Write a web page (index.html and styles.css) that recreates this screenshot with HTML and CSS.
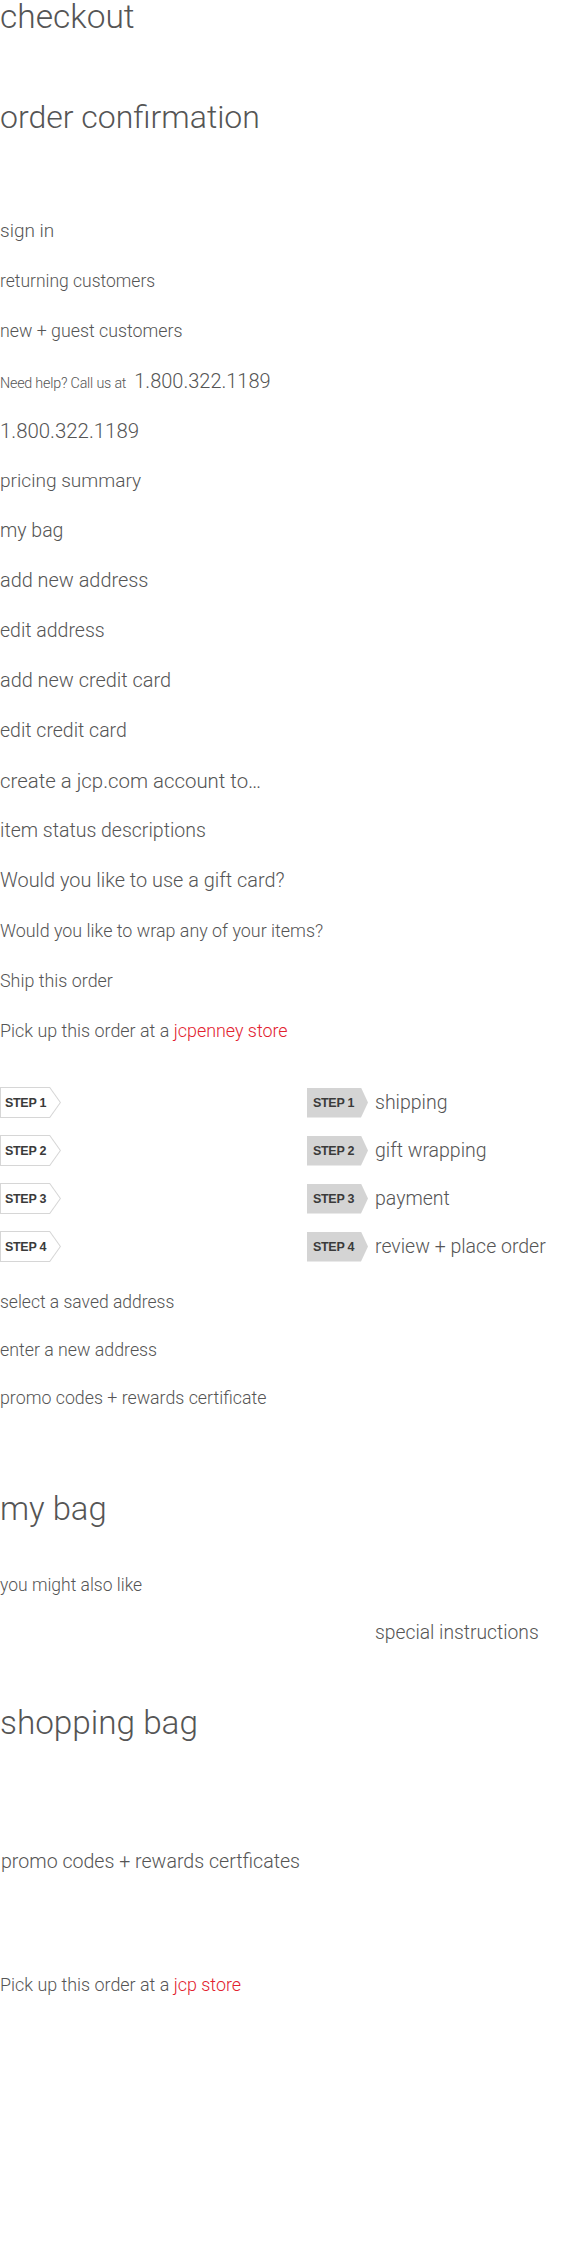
FILE: index.html
```html
<!DOCTYPE html>
<html lang="en">
<head>
<meta charset="utf-8">
<title>checkout labels</title>
<link rel="stylesheet" href="styles.css">
</head>
<body>
<main class="page">
  <h1 class="title title--main">checkout</h1>
  <h1 class="title title--sub">order confirmation</h1>

  <ul class="rows">
    <li class="row row--19">sign in</li>
    <li class="row row--sm">returning customers</li>
    <li class="row row--sm row--wide">new + guest customers</li>
    <li class="row"><span class="help">Need help? Call us at</span><span class="phone">1.800.322.1189</span></li>
    <li class="row row--20">1.800.322.1189</li>
    <li class="row row--191">pricing summary</li>
    <li class="row">my bag</li>
    <li class="row row--198">add new address</li>
    <li class="row">edit address</li>
    <li class="row row--198">add new credit card</li>
    <li class="row">edit credit card</li>
    <li class="row row--20">create a jcp.com account to…</li>
    <li class="row">item status descriptions</li>
    <li class="row row--198">Would you like to use a gift card?</li>
    <li class="row row--md">Would you like to wrap any of your items?</li>
    <li class="row row--md">Ship this order</li>
    <li class="row row--md">Pick up this order at a <span class="red">jcpenney store</span></li>
  </ul>

  <div class="steps">
    <div class="badge-outline"><div class="badge-inner">STEP 1</div></div>
    <div class="step"><div class="badge-fill">STEP 1</div><span class="step-label">shipping</span></div>
    <div class="badge-outline"><div class="badge-inner">STEP 2</div></div>
    <div class="step"><div class="badge-fill">STEP 2</div><span class="step-label">gift wrapping</span></div>
    <div class="badge-outline"><div class="badge-inner">STEP 3</div></div>
    <div class="step"><div class="badge-fill">STEP 3</div><span class="step-label">payment</span></div>
    <div class="badge-outline"><div class="badge-inner">STEP 4</div></div>
    <div class="step"><div class="badge-fill">STEP 4</div><span class="step-label">review + place order</span></div>
  </div>

  <ul class="rows rows--tight">
    <li class="row row--sm">select a saved address</li>
    <li class="row row--sm row--wide">enter a new address</li>
    <li class="row row--sm row--wide">promo codes + rewards certificate</li>
  </ul>

  <h2 class="big big--bag">my bag</h2>
  <p class="line line--like">you might also like</p>
  <p class="line line--special">special instructions</p>
  <h2 class="big big--shopping">shopping bag</h2>
  <p class="line line--promo">promo codes + rewards certficates</p>
  <p class="line line--pickup">Pick up this order at a <span class="red">jcp store</span></p>
</main>
</body>
</html>
```
FILE: styles.css
```css
html, body {
  margin: 0;
  padding: 0;
  background: #ffffff;
}

body {
  font-family: Roboto, "Liberation Sans", Arial, sans-serif;
  font-weight: 300;
  color: #555555;
}

.page {
  display: flex;
  flex-direction: column;
  align-items: flex-start;
  min-height: 2250px;
}

.title {
  margin: 0;
  font-weight: 300;
  white-space: nowrap;
}

.title--main {
  font-size: 33.5px;
  line-height: 34px;
  height: 34px;
}

.title--sub {
  font-size: 32px;
  line-height: 30px;
  height: 30px;
  margin-top: 68px;
}

.rows {
  list-style: none;
  margin: 73.5px 0 0;
  padding: 0;
}

.row {
  height: 50px;
  line-height: 50px;
  font-size: 19.5px;
  white-space: nowrap;
}

.row--sm { font-size: 17.5px; }
.row--md { font-size: 17.9px; }
.row--19 { font-size: 19px; }
.row--191 { font-size: 19.1px; }
.row--198 { font-size: 19.9px; }
.row--20 { font-size: 20.4px; }
.row--sm.row--wide { font-size: 17.8px; }

.help {
  font-size: 14.3px;
  letter-spacing: -0.2px;
}

.phone {
  font-size: 20px;
  margin-left: 8px;
}

.red { color: #e2212e; }

/* steps */
.steps {
  display: grid;
  grid-template-columns: 307px auto;
  grid-auto-rows: 31px;
  row-gap: 17px;
  margin-top: 31.5px;
}

.badge-outline {
  width: 61px;
  height: 31px;
  padding: 1px;
  box-sizing: border-box;
  background: #d6d6d6;
  clip-path: polygon(0 0, 50px 0, 61px 50%, 50px 100%, 0 100%);
}

.badge-inner,
.badge-fill {
  font-family: "Liberation Sans", Arial, sans-serif;
  font-size: 12.5px;
  font-weight: bold;
  letter-spacing: -0.3px;
  color: #3a3a3a;
}

.badge-inner {
  height: 100%;
  background: #ffffff;
  clip-path: polygon(0 0, 48.5px 0, 58.8px 50%, 48.5px 100%, 0 100%);
  display: flex;
  align-items: center;
  padding-left: 4px;
}

.step {
  display: flex;
  align-items: center;
}

.badge-fill {
  width: 61px;
  height: 30px;
  box-sizing: border-box;
  padding-left: 6px;
  display: flex;
  align-items: center;
  background: #d4d4d4;
  clip-path: polygon(0 0, 54px 0, 61px 50%, 54px 100%, 0 100%);
}

.step-label {
  margin-left: 7px;
  font-size: 19.5px;
  line-height: 31px;
  white-space: nowrap;
}

.rows--tight {
  margin-top: 16px;
}

.rows--tight .row {
  height: 48px;
  line-height: 48px;
}

.big {
  margin: 0;
  font-weight: 300;
  line-height: 40px;
  height: 40px;
  white-space: nowrap;
}

.big--bag {
  font-size: 32.8px;
  margin-top: 67px;
}

.big--shopping {
  font-size: 33.3px;
  margin-top: 55px;
}

.line {
  margin: 0;
  line-height: 30px;
  height: 30px;
  white-space: nowrap;
}

.line--like {
  font-size: 17.5px;
  margin-top: 41px;
}

.line--special {
  font-size: 19.3px;
  margin-top: 18px;
  margin-left: 375px;
}

.line--promo {
  font-size: 19.6px;
  margin-top: 104px;
  padding-left: 1px;
}

.line--pickup {
  font-size: 17.9px;
  margin-top: 93px;
}
```
